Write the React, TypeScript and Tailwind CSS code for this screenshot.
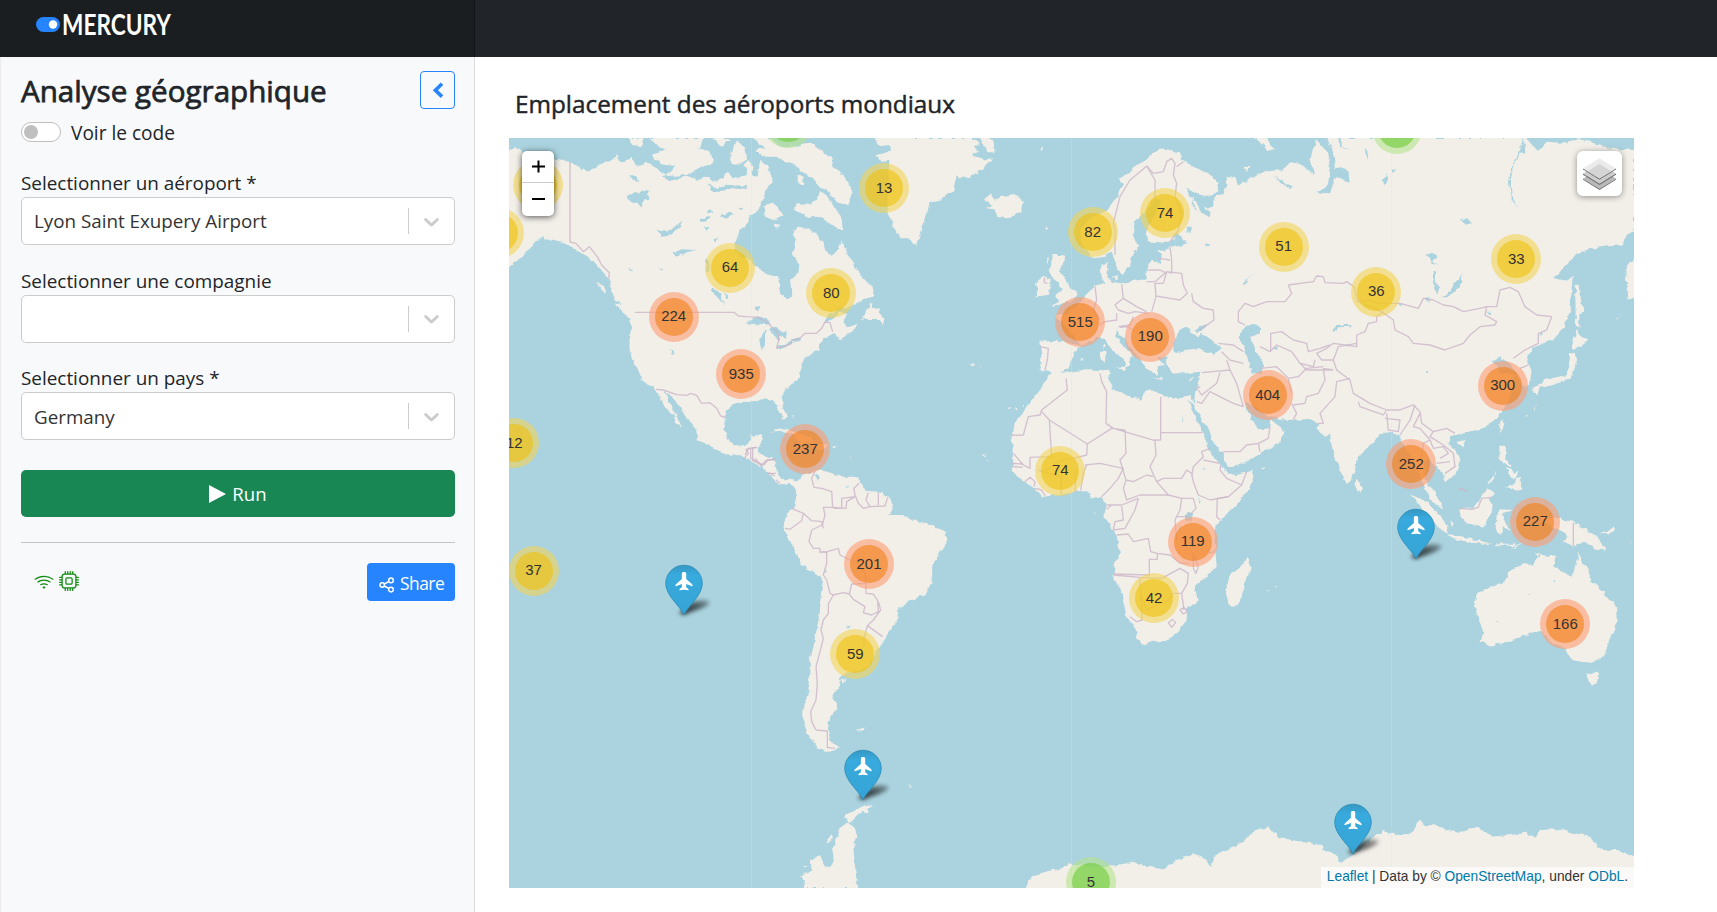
const LAND = "#f2efe9";
const WATER = "#aad3df";

type Region = { t: string; land?: string[]; water?: string[]; border?: string[] };

const regions: Region[] = [
  {
    t: "translate(500 60) scale(.33333)",
    land: [
      "M0 270L27 278L45 258L70 278L100 285L150 298L210 305L240 325L265 335L290 320L320 303L345 297L352 282L362 308L385 302L392 288L402 308L415 318L440 308L470 325L500 348L485 352L510 364L530 358L560 350L590 362L620 350L640 365L665 355L680 335L700 355L735 350L742 330L730 315L745 300L760 320L757 345L770 350L775 320L782 303L802 315L813 345L815 370L795 390L790 420L780 440L765 462L748 467L745 490L720 512L708 540L704 575L725 590L750 602L775 625L800 643L835 652L840 700L862 718L875 700L870 662L895 640L898 615L878 585L885 560L882 515L895 500L920 505L945 520L970 545L975 570L995 587L1015 570L1025 545L1040 580L1055 600L1065 625L1090 655L1115 680L1120 710L1090 718L1050 738L1015 745L985 765L970 790L990 782L1020 758L1042 762L1030 790L1045 802L1072 792L1060 815L1020 838L1000 820L975 835L960 850L960 870L925 885L905 910L905 935L890 960L860 985L845 1010L850 1040L860 1070L852 1082L835 1050L830 1025L790 1017L755 1027L730 1025L690 1040L675 1062L672 1110L690 1145L720 1160L745 1150L752 1130L785 1122L787 1140L770 1175L800 1190L825 1200L822 1235L845 1262L825 1250L800 1228L760 1208L720 1185L690 1187L640 1165L590 1138L592 1110L560 1075L535 1035L515 1010L494 992L502 1015L515 1042L530 1070L547 1105L528 1088L520 1065L498 1045L480 1010L465 985L430 965L410 920L395 895L388 860L393 800L390 765L365 740L345 715L335 690L325 655L300 625L275 598L240 575L200 552L150 540L130 530L105 545L85 572L60 595L27 625L0 640Z",
      "M380 234L398 255L425 258L430 234Z",
      "M450 234L475 262L500 268L455 285L480 312L522 318L495 348L560 345L595 325L640 310L632 275L598 265L612 234Z",
      "M640 234L660 258L690 242L684 234Z",
      "M690 300L698 262L712 238L735 270L738 300L715 315L700 312Z",
      "M755 234L810 234L850 262L900 258L930 245L960 268L992 290L1000 320L1030 345L1060 395L1040 435L1010 425L990 400L960 380L935 350L905 335L880 310L850 305L830 290L790 290L765 272L795 262Z",
      "M890 430L930 432L950 415L965 395L985 410L1000 440L1025 470L1028 512L1005 502L960 470L920 470L885 450Z",
      "M790 440L820 425L850 465L820 480L795 470Z",
      "M893 345L912 352L908 378L893 370Z",
      "M820 490L840 495L830 503Z",
      "M880 508L890 512L886 520Z",
      "M1118 725L1105 745L1082 772L1095 780L1135 780L1150 795L1152 778L1135 758L1140 742L1115 745Z",
      "M345 728L372 742L402 772L398 782L370 762Z",
      "M295 668L308 678L318 702L303 690Z",
      "M815 1115L840 1105L880 1115L930 1130L950 1145L905 1150L880 1125L840 1112Z",
      "M935 1150L985 1158L965 1170L940 1168Z",
      "M998 1160L1012 1160L1010 1164L998 1164Z",
    ],
    water: [
      "M380 410L400 400L425 395L450 388L440 405L450 415L430 425L425 440L412 425L395 425Z",
      "M392 345L408 350L415 365L398 362Z",
      "M470 510L500 515L530 495L548 482L535 505L505 528L485 530Z",
      "M520 580L545 568L592 570L560 576L530 590Z",
      "M635 685L650 690L660 700L672 735L655 715L640 700Z",
      "M665 690L688 715L682 720Z",
      "M735 792L770 768L800 775L812 795L785 788L765 795Z",
      "M800 808L785 820L778 845L785 870L795 855L795 825Z",
      "M802 805L825 800L845 815L860 812L855 835L838 825L835 845L825 825Z",
      "M828 860L850 855L875 845L872 855L840 868Z",
      "M873 840L900 832L898 843L878 848Z",
      "M508 870L520 875L517 883Z",
      "M765 740L777 738L775 750L766 750Z",
      "M480 625L490 628L486 633Z",
      "M385 625L397 635L390 636Z",
      "M620 455L635 450L640 458L624 462Z",
      "M660 470L690 455L700 462L675 475Z",
      "M600 480L625 470L630 476L605 490Z",
      "M610 500L625 498L620 510Z",
      "M615 600L625 595L630 640L620 635Z",
      "M640 535L655 530L650 545Z",
      "M715 440L730 442L722 450Z",
      "M625 370L650 385L690 375L745 378L740 390L700 385L670 395L640 395Z",
    ],
    border: [
      "M210 308V546L228 550L250 575L268 560L292 590L305 615L328 638L326 655",
      "M405 757H702L715 768L740 770L775 772L805 790L835 822L836 840L830 865L872 852L875 842L900 835L915 820L950 820L965 805L975 786L990 788L998 815",
      "M468 988L490 990L530 1004L560 1006L572 1000L590 1006L605 1030L630 1028L650 1045L662 1068L676 1073",
      "M730 1198L745 1180L738 1168L770 1162M752 1165V1195L790 1215L805 1200L825 1198M765 1195L785 1218M805 1238L825 1248",
    ],
  },
  {
    t: "translate(780 130) scale(.33333)",
    land: [
      "M283 24L300 45L328 50L330 65L290 75L305 95L328 92L326 150L322 240L340 290L362 325L385 325L405 347L415 335L425 290L440 250L450 215L485 208L520 180L530 135L540 145L570 140L605 120L640 85L610 88L575 75L600 65L580 50L600 42L575 24Z",
      "M600 24L612 45L625 70L643 70L642 40L630 24Z",
      "M615 210L630 190L645 212L665 200L700 192L715 198L730 218L720 245L680 265L650 260L640 238L618 234L638 226Z",
      "M818 375L850 375L855 390L835 425L857 440L870 475L892 488L878 512L850 520L815 528L835 512L822 498L845 480L838 460L818 445L808 420L815 400Z",
      "M768 460L790 440L812 450L808 490L785 500L765 502L775 480Z",
      "M798 385L806 378L803 400Z",
      "M780 55L790 53L786 61Z",
      "M796 292L805 294L800 303Z",
      "M570 700L586 702L580 706Z M600 710L607 712L603 714Z",
      "M682 830L692 834L686 838Z M705 832L715 838L708 841Z M725 828L730 820L728 832Z",
    ],
    border: ["M793 442V458L802 460"],
  },
  {
    t: "translate(1000 130) scale(.33333)",
    land: [
      "M118 635L180 632L245 648L215 610L190 580L165 560L205 550L240 520L262 490L290 465L312 458L303 430L303 408L322 395L327 412L322 435L335 455L365 460L400 452L440 447L440 415L455 390L480 402L485 375L475 365L510 353L550 345L525 325L485 340L450 338L440 315L445 290L468 250L485 215L470 205L440 240L405 275L398 310L412 345L420 352L398 370L390 410L368 432L352 418L342 385L335 365L312 380L280 385L250 350L240 300L270 265L320 240L345 210L370 160L355 148L385 130L410 105L440 90L455 70L490 55L540 68L545 88L580 110L625 130L650 150L655 180L630 200L590 192L555 172L572 200L590 215L600 245L625 262L632 245L612 235L640 230L640 205L670 190L682 165L680 138L705 140L715 165L750 145L800 125L850 118L865 95L900 102L945 135L938 110L930 95L940 50L955 24L1580 24L1600 50L1615 62L1640 35L1700 40L1735 24L1760 30L1820 55L1902 60L1902 305L1885 315L1865 345L1800 352L1760 360L1730 370L1700 405L1662 445L1700 452L1718 440L1715 470L1712 540L1690 590L1660 630L1630 640L1600 655L1578 690L1595 720L1590 760L1570 770L1550 740L1535 705L1500 680L1475 695L1500 725L1540 735L1540 770L1520 820L1490 865L1450 895L1390 910L1355 918L1345 940L1370 965L1380 1000L1370 1030L1335 1055L1328 1028L1310 1010L1285 985L1272 1000L1275 1050L1300 1080L1325 1120L1325 1135L1290 1110L1265 1050L1250 1010L1220 960L1200 920L1180 905L1140 910L1115 940L1070 985L1065 1020L1055 1050L1040 1062L1015 1010L995 950L990 908L975 920L950 895L960 885L925 868L860 870L815 862L790 850L760 825L735 815L745 850L762 878L775 898L805 895L815 868L835 885L852 905L835 940L780 972L740 995L682 1012L670 975L640 935L620 890L595 850L582 825L585 790L598 745L600 725L560 730L520 730L498 700L500 680L470 682L495 708L470 712L475 735L455 730L440 715L420 690L395 655L370 625L345 600L350 625L375 650L402 680L390 682L390 702L376 715L375 690L340 665L320 635L300 620L260 640L235 655L215 685L205 718L160 735L145 722L118 720L125 680Z",
      "M348 710L380 710L372 725Z",
      "M303 665L317 665L315 695L303 690Z",
      "M308 642L316 642L314 660Z",
      "M765 24L802 24L825 60L800 65L790 45Z",
      "M730 108L748 108L740 125Z",
      "M460 745L490 745L485 750Z M565 748L580 744L572 752Z",
      "M240 690L250 684L248 692Z M338 440L355 435L350 452Z",
      "M785 1013L793 1014L789 1018Z",
    ],
    water: [
      "M535 600L558 590L572 598L575 610L595 622L605 608L625 622L655 645L660 660L640 672L595 655L560 660L535 668L520 662L520 640Z",
      "M580 602L600 590L625 580L612 600L590 607Z",
      "M720 605L755 582L780 585L780 610L750 620L765 665L775 675L790 700L785 732L755 728L745 690L735 660L720 630Z",
      "M518 315L530 305L548 325L562 340L550 345L535 335Z",
      "M560 290L572 290L572 312L562 305Z",
      "M730 470L738 445L770 430L742 445L738 465Z",
      "M820 655L835 648L830 660Z",
      "M820 140L880 170L870 178Z M617 340L628 345L620 350Z",
      "M570 200L580 215L592 248L580 230Z",
    ],
    border: [
      "M345 375V330L345 300L340 280L360 200L390 150L420 125L440 108L460 130L490 125L500 95L515 85L525 100L520 135L530 160L525 200L545 250L535 300L510 335M440 108L465 150V210M530 110L550 95",
      "M510 350L515 390V430L500 425L490 460L465 460L468 500L455 545M445 420L480 420L500 430M475 385L510 390M440 455H465L500 425L545 430L550 465L562 490L540 510L510 505L468 498M575 490L580 515L610 535L640 540L642 570L600 600",
      "M285 470L290 510L280 540L300 570M365 462L370 505L345 525L355 540L385 550L405 545L445 550M370 505L410 530L440 545M350 550L350 570L315 575L300 585M355 590L390 585L400 560M120 650L145 655L142 690L135 720M400 600L380 590L360 592",
      "M865 465L940 455L950 438L970 440L975 458L1030 460L1040 455L1062 470L1070 500L1075 515M865 465L875 490L855 515L800 515L760 530L735 520L715 545L715 575L735 585M812 665V610L845 605L880 630L920 640L925 665L960 655L990 645M780 650L810 665L830 645L875 665L900 700L940 710L945 690M875 790L865 745L895 740L920 715L970 710M780 715L830 710L865 745",
      "M655 640L700 645L730 665M665 665L690 690L730 700M680 690L690 720L605 728M660 728L650 760L605 795L595 780M690 720L710 760L730 830L700 820L630 785L605 820L590 815M585 780L600 770M670 965L720 965L740 945L775 940L780 965M775 940L805 925L810 890M875 820L890 850L880 868",
      "M1070 515L1110 510L1130 520L1200 520L1255 535L1270 505L1300 510L1330 525L1360 530L1390 545L1440 535L1460 530L1455 555L1490 575L1485 585L1440 590L1410 615L1390 640L1335 660L1290 645L1240 640L1225 620L1185 600L1180 570L1145 545L1075 515M1460 530L1490 530L1500 480L1530 472L1555 485L1575 530L1610 555L1655 560L1640 600L1615 610V640L1575 660L1540 685M1560 715L1585 705",
      "M1150 545L1130 560L1130 575L1105 580L1095 605L1070 615L1070 650L1000 640L980 655L950 670L965 690L1000 690L1010 720L1050 750L1060 790L1110 820L1160 840L1200 840L1240 825L1260 845L1265 880L1300 905L1340 895L1365 910M1000 690L1015 650L1070 640M1075 815L1080 830L1150 855L1160 840M1160 850L1165 900L1195 905L1200 870L1155 865M1200 915L1230 870L1245 825M1260 850L1240 890L1260 895L1290 930M1260 1010L1270 940L1290 930L1300 955L1330 950L1345 970L1320 985M1300 905L1290 920L1330 945L1360 970L1365 1010L1335 1030M1310 1000L1350 995M1375 1080L1385 1075L1400 1085",
      "M1050 745L1010 755L1005 800L960 850L970 880L950 880M1000 720L970 715L975 750L955 790L920 800L915 820L880 825M900 700L920 720L1000 720",
    ],
  },
  {
    t: "translate(1300 130) scale(.33333)",
    land: [
      "M700 775L740 745L795 738L808 710L810 670L825 665L828 700L815 745L780 755L740 768L718 772L712 797L700 790Z",
      "M815 652L830 600L848 622L865 632L835 655L820 660Z",
      "M825 465L835 468L850 545L838 550L838 595L828 590Z",
      "M1010 385L985 400L977 425L975 450L982 475L985 510L1010 500Z",
      "M597 885L610 868L613 880L605 907Z",
      "M472 935L497 930L485 952Z",
      "M168 1045L188 1070L180 1085L167 1080Z",
      "M598 950L618 950L616 980L628 1000L640 1015L615 1000L598 990Z",
      "M650 1045L662 1040L664 1082L645 1080L615 1070L640 1065Z",
      "M618 1012L630 1015L645 1030L655 1020L650 1045L635 1045Z",
      "M565 1060L590 1030L592 1033L570 1062Z",
      "M870 628L915 600L880 622Z M945 572L975 545L950 570Z M676 860L685 850L680 860Z M700 845L712 818L705 842Z",
    ],
    water: [
      "M45 24L85 24L100 70L105 115L125 112L145 125L150 160L130 150L108 140L90 190L60 188L50 182L80 175L90 130L85 70Z",
      "M115 24L125 24L125 50L150 60L130 55L118 45Z",
      "M195 50L202 60L205 90L198 80Z",
      "M245 150L260 130L265 150L250 165Z M270 120L290 118L275 128Z",
      "M422 502L445 490L465 460L487 430L485 455L465 485L440 502Z",
      "M375 375L395 368L410 375L400 395L412 405L395 400L390 380Z",
      "M100 600L110 585L155 585L152 590L115 592L105 607Z",
      "M130 645L150 645L140 652Z M378 720L388 722L385 730Z",
      "M480 265L510 270L512 280L495 285Z",
      "M295 523L308 520L306 530Z M560 545L572 545L568 555Z",
      "M378 502L388 505L385 520Z M718 605L732 605L725 618Z",
      "M398 420L405 425L405 450L418 475L412 495L400 460Z",
      "M672 24L676 70L664 66L640 105L634 140L632 170L640 210L655 235L636 212L627 160L634 110L660 62Z",
    ],
  },
  {
    t: "translate(740 400) scale(.33333)",
    land: [
      "M40 170L60 192L85 220L118 255L150 248L165 262L172 290L165 320L140 345L128 390L160 440L185 495L245 535L248 560L242 620L230 690L210 790L205 870L190 930L190 965L205 1005L235 1045L270 1055L300 1042L275 1030L262 990L260 965L285 935L292 912L275 890L298 860L300 830L320 820L385 800L420 740L450 690L475 655L478 625L515 600L555 585L575 545L578 490L600 460L622 430L620 395L590 385L560 370L520 360L485 345L445 345L462 325L450 300L430 280L380 275L365 250L345 230L300 230L262 215L232 210L185 225L170 245L150 236L130 243L110 215L105 180Z",
      "M190 1464L195 1445L180 1430L215 1412L212 1380L240 1365L255 1400L280 1395L280 1340L300 1290L322 1265L345 1285L352 1310L340 1340L345 1400L352 1464Z",
      "M312 1252L345 1230L365 1220L405 1214L385 1222L385 1240L362 1235L330 1265Z",
      "M258 1330L275 1302L278 1315L265 1332Z M187 1395L200 1395L192 1402Z",
      "M345 990L375 982L370 992Z M590 1028L612 1040L605 1036Z M505 1156L518 1158L510 1161Z",
      "M725 165L740 168L730 172Z M738 178L748 180L742 182Z",
      "M277 138L293 140L285 143Z M302 840L316 838L310 848Z M328 165L335 178L342 190L330 170Z",
      "M155 45L160 50L157 55Z",
    ],
    water: ["M228 220L237 230L233 242L226 236Z", "M320 255L327 258L323 265Z", "M250 505L260 515L255 520Z", "M320 680L332 680L326 688Z"],
    border: [
      "M225 213L215 235L222 262L245 265L275 275L278 322L250 322L255 345L247 375L215 390L207 425L220 445H240V457L262 455L295 445L300 465L330 480L355 490L375 520L378 550L335 552L328 582L310 578L280 585L270 580L260 540L250 525L260 490L260 458",
      "M280 325L305 325L305 295L345 290L342 265L357 250M345 285L355 310L370 325L390 320L378 300L385 278M390 320L435 318L443 292M415 280L415 315M278 322L318 325L320 305L345 290",
      "M155 325L190 340L185 362L150 388L135 385M190 340L215 362L245 365L250 385M245 455L262 458M378 550V580L400 582L413 602L415 635L395 645L370 638L375 620L340 598L328 582M415 605L422 630L400 660L382 677L428 710M382 677L372 715V740",
      "M280 585L265 612L265 640L250 660L243 690L250 715L240 755L228 800L232 850L228 900L212 935L215 965L228 990L262 993V1042L285 1045",
      "M15 165L25 145L50 142M38 145V182L65 195L80 180L104 178M82 220L108 220M108 240L120 250",
    ],
  },
  {
    t: "translate(980 420) scale(.33333)",
    land: [
      "M205 -130L215 -145L260 -142L320 -152L388 -148L388 -115L400 -92L440 -75L482 -60L495 -88L530 -88L545 -72L600 -65L635 -72L640 -45L622 -60L640 -20L662 20L680 70L695 105L722 132L745 160L770 165L820 152L818 185L800 220L760 265L720 300L700 330L705 380L710 440L685 465L645 500L653 545L622 560L620 600L590 640L565 660L520 665L487 675L465 650L470 635L440 590L425 520L400 470L405 430L420 400L410 345L370 290L380 255L365 232L335 232L320 210L285 215L240 225L190 230L150 195L118 175L95 155L100 120L95 50L110 0L150 -50L180 -90Z",
      "M800 410L812 445L795 495L775 555L748 558L738 520L748 465L782 445Z",
      "M862 507L870 510L866 514Z M885 498L892 499L888 503Z M843 143L856 145L848 148Z M340 274L347 276L343 279Z",
    ],
    water: ["M615 285L625 278L640 280L635 302L615 298Z", "M655 230L662 245L658 252Z", "M598 310L602 340L596 330Z", "M668 148L678 149L672 153Z", "M604 -25L614 12L610 8Z"],
    border: [
      "M258 -125L262 -90L230 -65L185 -30L180 -15L145 -10L130 45L95 46M185 -25L208 0L215 110L150 112L150 145L130 135L100 100M208 0L322 72L320 105L280 115L240 122L200 150M322 72L395 25L435 30M360 -140L365 -115L380 -85L378 10L400 25L525 62M542 -70V60H525L528 105L510 140L530 185L565 225M542 38H668",
      "M435 30L438 100L420 120L438 180L430 205L440 240L480 225L565 225L605 235L640 235M438 180L460 185L500 165L520 170M530 185L550 175L605 175L620 150L635 160L640 185L655 225L690 240L745 230L785 195L740 175L720 150L722 135M635 170L640 140L670 110L665 95L690 85M670 120L720 130M785 195L800 155",
      "M315 135L360 130L430 145L415 175L390 205L365 230M302 210L310 160L320 135M380 255H425L475 235M380 268L395 255M425 258L430 300L405 305L400 330L435 325L465 270L475 235M410 345L445 342L460 365L505 355L512 395L532 400V418H508V465L400 462M400 465L480 472L545 475M532 400L570 405L600 430L625 430M605 235L600 270L585 300L590 360M640 235L648 265L625 290H590M712 235L710 290L720 300M715 235L745 230M545 475L600 445L625 460L622 490L605 520L580 520M605 520L612 570M480 475L487 600L470 605L450 590",
      "M600 570L612 562L622 575L610 582ZM565 608L578 598L587 608L575 622ZM640 400L655 440L648 460L640 445ZM485 530L500 570L530 555L560 545L580 520M685 400L705 395M95 130L128 132M98 140L128 142M135 185L150 172L165 185L162 200M165 205L185 210L195 228M285 215L288 150M243 222L245 150M175 150L240 170",
    ],
  },
  {
    t: "translate(1330 420) scale(.33333)",
    land: [
      "M440 520L470 505L520 490L540 455L580 430L605 440L620 412L635 405L680 410L670 435L700 460L725 470L735 440L745 395L755 425L772 440L785 485L820 515L858 560L860 600L845 650L820 710L785 728L755 725L725 720L705 680L670 672L632 632L590 645L540 663L480 678L452 665L460 640L445 590L432 560Z",
      "M768 758L806 758L800 790L785 797Z",
      "M620 285L690 295L740 310L770 330L800 350L830 392L790 385L765 365L735 378L698 365L715 350L690 330L650 310Z",
      "M808 342L842 330L852 318L855 330L840 343Z M870 335L885 350L880 345Z M890 355L912 372L905 368Z",
      "M388 265L430 262L455 230L470 205L495 220L480 240L490 265L475 295L465 320L410 310L392 290Z",
      "M240 220L280 240L320 275L340 300L355 315L353 342L325 322L290 280Z",
      "M355 343L400 350L450 362L488 372L440 370L370 358Z M495 370L560 372L555 378L500 375Z M535 390L580 365L560 380Z",
      "M500 285L510 268L550 270L515 280L520 300L540 330L520 322L512 342L497 325Z",
      "M360 305L372 310L366 317Z",
      "M612 402L632 400L625 407Z",
    ],
    water: ["M594 522L604 524L598 528Z M668 482L675 484L670 487Z M495 602L502 604L498 607Z"],
    border: ["M730 308V378", "M390 265L425 268L445 262L455 235L485 232"],
  },
  {
    t: "translate(1000 770) scale(.41209 .33333)",
    land: [
      "M62 354L75 325L110 305L150 295L165 280L220 290L290 285L320 275L340 285L395 298L430 270L470 250L500 265L512 290L522 258L590 215L620 180L650 172L680 205L780 225L785 240L815 250L822 280L865 250L900 205L930 183L960 195L1000 190L1015 150L1030 170L1055 165L1085 180L1120 185L1160 170L1190 200L1240 195L1275 185L1300 203L1310 180L1355 178L1430 200L1460 240L1500 240L1553 265V360H62Z",
    ],
  },
];

type Size = "s" | "m" | "l";
const outer: Record<Size, string> = {
  s: "bg-[rgba(181,226,140,0.6)]",
  m: "bg-[rgba(241,211,87,0.6)]",
  l: "bg-[rgba(253,156,115,0.6)]",
};
const inner: Record<Size, string> = {
  s: "bg-[rgba(110,204,57,0.6)]",
  m: "bg-[rgba(240,194,12,0.6)]",
  l: "bg-[rgba(241,128,23,0.6)]",
};

const clusters: [number, number, string, Size][] = [
  [278.5, -15.5, "", "s"],
  [28.7, 47, "", "m"],
  [-10, 94.7, "", "m"],
  [375, 50, "13", "m"],
  [221, 129.7, "64", "m"],
  [322.3, 155, "80", "m"],
  [164.7, 178.7, "224", "l"],
  [232.3, 236, "935", "l"],
  [296.3, 311.3, "237", "l"],
  [5.3, 305, "12", "m"],
  [24.5, 432.5, "37", "m"],
  [583.7, 94, "82", "m"],
  [656, 75, "74", "m"],
  [774.7, 108.7, "51", "m"],
  [571.3, 184, "515", "l"],
  [641.3, 198.7, "190", "l"],
  [758.7, 257.3, "404", "l"],
  [551.3, 332.7, "74", "m"],
  [867.3, 153.7, "36", "m"],
  [1007.3, 121, "33", "m"],
  [993.7, 247.5, "300", "l"],
  [902.3, 326, "252", "l"],
  [1026.3, 383.7, "227", "l"],
  [887.7, -9, "", "s"],
  [360, 426, "201", "l"],
  [346.3, 516, "59", "m"],
  [683.7, 403.7, "119", "l"],
  [645, 460, "42", "m"],
  [1056.3, 486, "166", "l"],
  [582, 744, "5", "s"],
];

const pins: [number, number][] = [
  [175, 427],
  [353.7, 612],
  [907.3, 371],
  [843.7, 665.5],
];

function WorldMap() {
  return (
    <svg className="block h-full w-full" viewBox="509 138 1125 750">
      <defs>
        <filter id="coast" x="0" y="0" width="100%" height="100%">
          <feTurbulence type="fractalNoise" baseFrequency="0.16" numOctaves="2" seed="4" result="n" />
          <feDisplacementMap in="SourceGraphic" in2="n" scale="5" xChannelSelector="R" yChannelSelector="G" />
        </filter>
      </defs>
      <g filter="url(#coast)">
        <rect x="400" y="60" width="1340" height="900" fill={WATER} />
        {regions.map((r) => (
          <g key={r.t} transform={r.t} fill={LAND}>
            {r.land?.map((d) => <path key={d} d={d} />)}
          </g>
        ))}
        {regions.map((r) => (
          <g key={r.t} transform={r.t} fill={WATER}>
            {r.water?.map((d) => <path key={d} d={d} />)}
          </g>
        ))}
      </g>
      {regions.map((r) => (
        <g key={r.t} transform={r.t} fill="none" stroke="#cbb5c8" strokeOpacity=".8" strokeWidth="4" strokeLinejoin="round">
          {r.border?.map((d) => <path key={d} d={d} />)}
        </g>
      ))}
      <path d="M751.5 138V888M1071.5 138V888M1391.5 138V888" stroke="#dfe6e3" strokeOpacity=".28" />
    </svg>
  );
}

function Pin({ x, y }: { x: number; y: number }) {
  return (
    <div className="absolute h-[52px] w-[70px]" style={{ left: x - 19, top: y }}>
      <svg width="70" height="52" viewBox="0 0 70 52" overflow="visible">
        <defs>
          <linearGradient id="pin" x1="0" y1="0" x2="0" y2="1">
            <stop offset="0" stopColor="#3598c4" />
            <stop offset=".2" stopColor="#38aadd" />
            <stop offset="1" stopColor="#36a3d5" />
          </linearGradient>
          <linearGradient id="shade" x1="0" y1="1" x2="1" y2="0">
            <stop offset="0" stopOpacity=".8" />
            <stop offset=".55" stopOpacity=".6" />
            <stop offset="1" stopOpacity=".25" />
          </linearGradient>
          <filter id="soft" x="-40%" y="-60%" width="180%" height="220%">
            <feGaussianBlur stdDeviation="1.9" />
          </filter>
        </defs>
        <path d="M14 48L25 38C32 34.500 42 34.500 44.500 37C44.500 42 30 45 19 50Z" fill="url(#shade)" filter="url(#soft)" />
        <path
          d="M19 50C17 43 .7 31 .7 18.5A18.3 18.3 0 0 1 37.3 18.5C37.3 31 21 43 19 50Z"
          fill="url(#pin)"
          stroke="#2d8bb5"
          strokeWidth=".8"
        />
        <path
          transform="translate(10.2 7) scale(.3333)"
          fill="#fff"
          d="M20 6C20 2 22 0 26.500 0C31 0 33 2 33 6V21L50 36C53 39 53 43 51 43L33 36V46L40 51V55L27 53L13 55V51L20 46V36L2 43C0 43 0 39 3 36L20 21Z"
        />
      </svg>
    </div>
  );
}

function Select({ label, value }: { label: string; value?: string }) {
  return (
    <div className="mb-[20.6px]">
      <div className="h-[29px] text-[18.9px] leading-[30px] whitespace-nowrap">{label}</div>
      <div className="flex h-[48px] items-center rounded-[5px] border border-[#ccc] bg-white">
        <div className="flex-1 pt-px pl-[12px] text-[18.8px] whitespace-nowrap text-[#333]">{value}</div>
        <div className="h-[26px] w-px bg-[#ccc]" />
        <div className="flex w-[45px] justify-center">
          <svg width="25" height="25" viewBox="0 0 20 20" fill="#ccc">
            <path d="M4.516 7.548c0.436-0.446 1.043-0.481 1.576 0l3.908 3.747 3.908-3.747c0.533-0.481 1.141-0.446 1.574 0 0.436 0.445 0.408 1.197 0 1.615-0.406 0.418-4.695 4.502-4.695 4.502-0.217 0.223-0.502 0.335-0.787 0.335s-0.57-0.112-0.789-0.335c0 0-4.287-4.084-4.695-4.502s-0.436-1.17 0-1.615z" />
          </svg>
        </div>
      </div>
    </div>
  );
}

export default function App() {
  return (
    <div className="flex h-[912px] w-[1717px] flex-col overflow-hidden bg-white font-['Open_Sans','Noto_Sans',sans-serif] text-[#212529]">
      <header className="flex h-[57px] shrink-0 bg-[#212529]">
        <div className="w-[475px] border-r border-[#121517] bg-[#1a1e21] pt-[6px] pl-[36px]">
          <svg width="150" height="40" viewBox="0 -4 150 40" overflow="visible">
            <rect x="0" y="7" width="24" height="15" rx="7.5" fill="#2684ff" />
            <circle cx="17" cy="14.5" r="4.2" fill="#fff" />
            <text x="26" y="24.5" fill="#fff" fontFamily="Lato, sans-serif" fontWeight="700" fontSize="28" textLength="109" lengthAdjust="spacingAndGlyphs">
              MERCURY
            </text>
          </svg>
        </div>
      </header>
      <div className="flex flex-1">
        <aside className="w-[475px] shrink-0 border-x border-r-[#d9dbdd] border-l-[#ececee] bg-[#f8f9fb] pr-[19px] pl-5">
          <div className="flex h-[52px] items-end justify-between">
            <h1 className="text-[29.6px] leading-[37px] whitespace-nowrap [-webkit-text-stroke:0.75px_#212529]">Analyse géographique</h1>
            <button className="flex h-[38px] w-[35px] items-center justify-center rounded-[4px] border border-[#2684ff]">
              <svg width="12" height="17" viewBox="0 0 12 17" fill="none" stroke="#2684ff" strokeWidth="3.6">
                <path d="M10 1.8L3.4 8.2L10 14.6" />
              </svg>
            </button>
          </div>
          <div className="mt-[13px] flex h-[20px] items-center">
            <div className="flex h-[20px] w-[40px] items-center rounded-full border border-[#bfbfbf] bg-white pl-[2px]">
              <div className="size-[14px] rounded-full bg-[#bfbfbf]" />
            </div>
            <span className="mt-[2px] ml-[10px] text-[19.1px] whitespace-nowrap">Voir le code</span>
          </div>
          <div className="mt-[26px]">
            <Select label="Selectionner un aéroport *" value="Lyon Saint Exupery Airport" />
            <Select label="Selectionner une compagnie" />
            <Select label="Selectionner un pays *" value="Germany" />
          </div>
          <button className="mt-[30px] flex h-[47px] w-full items-center justify-center gap-[6px] rounded-[5px] bg-[#198754] text-[18.6px] text-white">
            <svg width="17" height="18" viewBox="0 0 17 18" fill="#fff">
              <path d="M0 0L17 9L0 18Z" />
            </svg>
            Run
          </button>
          <div className="mt-[25px] border-t border-[#c3c4c6]" />
          <div className="mt-[20px] flex h-[38px] justify-between">
            <div className="flex gap-[5px] pt-[8px] pl-[13px]">
              <svg className="mt-[1px]" width="20" height="20" viewBox="0 0 16 16" fill="#108a10">
                <path d="M15.384 6.115a.485.485 0 0 0-.047-.736A12.44 12.44 0 0 0 8 3C5.259 3 2.723 3.882.663 5.379a.485.485 0 0 0-.048.736.52.52 0 0 0 .668.05A11.45 11.45 0 0 1 8 4c2.507 0 4.827.802 6.716 2.164.205.148.49.13.668-.049" />
                <path d="M13.229 8.271a.482.482 0 0 0-.063-.745A9.46 9.46 0 0 0 8 6c-1.905 0-3.68.56-5.166 1.526a.48.48 0 0 0-.063.745.525.525 0 0 0 .652.065A8.46 8.46 0 0 1 8 7a8.46 8.46 0 0 1 4.576 1.336c.206.132.48.108.653-.065m-2.183 2.183c.226-.226.185-.605-.1-.75A6.5 6.5 0 0 0 8 9c-1.06 0-2.062.254-2.946.704-.285.145-.326.524-.1.75l.015.015c.16.16.407.19.611.09A5.5 5.5 0 0 1 8 10c.868 0 1.69.201 2.42.56.203.1.45.07.61-.091zM9.06 12.44c.196-.196.198-.52-.04-.66A2 2 0 0 0 8 11.5a2 2 0 0 0-1.02.28c-.238.14-.236.464-.04.66l.706.706a.5.5 0 0 0 .707 0l.707-.707z" />
              </svg>
              <svg width="20" height="20" viewBox="0 0 16 16" fill="#108a10">
                <path d="M5 0a.5.5 0 0 1 .5.5V2h1V.5a.5.5 0 0 1 1 0V2h1V.5a.5.5 0 0 1 1 0V2h1V.5a.5.5 0 0 1 1 0V2A2.5 2.5 0 0 1 14 4.5h1.5a.5.5 0 0 1 0 1H14v1h1.5a.5.5 0 0 1 0 1H14v1h1.5a.5.5 0 0 1 0 1H14v1h1.5a.5.5 0 0 1 0 1H14a2.5 2.5 0 0 1-2.5 2.5v1.5a.5.5 0 0 1-1 0V14h-1v1.5a.5.5 0 0 1-1 0V14h-1v1.5a.5.5 0 0 1-1 0V14h-1v1.5a.5.5 0 0 1-1 0V14A2.5 2.5 0 0 1 2 11.5H.5a.5.5 0 0 1 0-1H2v-1H.5a.5.5 0 0 1 0-1H2v-1H.5a.5.5 0 0 1 0-1H2v-1H.5a.5.5 0 0 1 0-1H2A2.5 2.5 0 0 1 4.5 2V.5A.5.5 0 0 1 5 0m-.5 3A1.5 1.5 0 0 0 3 4.5v7A1.5 1.5 0 0 0 4.5 13h7a1.5 1.5 0 0 0 1.5-1.5v-7A1.5 1.5 0 0 0 11.5 3zM5 6.5A1.5 1.5 0 0 1 6.5 5h3A1.5 1.5 0 0 1 11 6.5v3A1.5 1.5 0 0 1 9.5 11h-3A1.5 1.5 0 0 1 5 9.5zM6.5 6a.5.5 0 0 0-.5.5v3a.5.5 0 0 0 .5.5h3a.5.5 0 0 0 .5-.5v-3a.5.5 0 0 0-.5-.5z" />
              </svg>
            </div>
            <button className="flex w-[88px] items-center rounded-[4px] bg-[#2684ff] pt-px pl-[12px] text-[17.4px] tracking-[-0.5px] text-white">
              <svg className="mt-[5px] mr-[5px]" width="16" height="16" viewBox="0 0 16 16" fill="none" stroke="#fff" strokeWidth="1.5">
                <circle cx="3.2" cy="8" r="2.2" />
                <circle cx="12" cy="3.4" r="2.3" />
                <circle cx="12" cy="12.6" r="2.3" />
                <path d="M5.2 7L10 4.5M5.2 9L10 11.5" />
              </svg>
              Share
            </button>
          </div>
        </aside>
        <main className="flex-1 pl-[34px]">
          <h2 className="h-[81px] pt-[30px] pl-[6px] text-[24.3px] leading-[34px] whitespace-nowrap [-webkit-text-stroke:0.45px_#212529]">Emplacement des aéroports mondiaux</h2>
          <div className="relative h-[750px] w-[1125px] overflow-hidden bg-[#aad3df] font-['Liberation_Sans',Arial,sans-serif]">
            <WorldMap />
            {clusters.map(([x, y, n, s]) => (
              <div
                key={`${x}-${y}`}
                className={`absolute flex size-[50px] items-center justify-center rounded-full ${outer[s]}`}
                style={{ left: x - 25, top: y - 25 }}
              >
                <div className={`flex size-[38px] items-center justify-center rounded-full text-[15px] text-[#333] ${inner[s]}`}>{n}</div>
              </div>
            ))}
            {pins.map(([x, y]) => (
              <Pin key={x} x={x} y={y} />
            ))}
            <div className="absolute top-[13px] left-[13px] w-[32px] rounded-[5px] bg-white shadow-[0_1px_6px_rgba(0,0,0,0.65)]">
              <div className="flex h-[32px] items-center justify-center border-b border-[#ccc]">
                <svg width="13" height="13" viewBox="0 0 13 13" stroke="#000" strokeWidth="2">
                  <path d="M0 6.5H13M6.5 .5V12.5" />
                </svg>
              </div>
              <div className="flex h-[33px] items-center justify-center">
                <svg width="13" height="13" viewBox="0 0 13 13" stroke="#000" strokeWidth="2">
                  <path d="M0 6H13" />
                </svg>
              </div>
            </div>
            <div className="absolute top-[13px] right-[12px] flex size-[45px] items-center justify-center rounded-[6px] bg-white shadow-[0_1px_6px_rgba(0,0,0,0.4)]">
              <svg width="33" height="33" viewBox="0 0 26 26">
                <path d="M.032 17.056l13-8 13 8-13 8z" fill="#b9b9b9" />
                <path d="M.032 17.056l-.032.93 13 8 13-8 .032-.93-13 8z" fill="#737373" />
                <path d="M0 13.076l13-8 13 8-13 8z" fill="#cdcdcd" />
                <path d="M0 13.076v.91l13 8 13-8v-.91l-13 8z" fill="#737373" />
                <path d="M0 8.986l13-8 13 8-13 8z" fill="#e9e9e9" fillOpacity=".9" />
                <path d="M0 8.986v.91l13 8 13-8v-.91l-13 8z" fill="#737373" />
                <path d="M3.8 11.3L13 5.6l9.2 5.7L13 17z" fill="#d5d5d5" />
              </svg>
            </div>
            <div className="absolute right-0 bottom-0 h-[21px] bg-white/70 px-[6px] text-[13.75px] leading-[19px] whitespace-nowrap text-[#333]">
              <span className="text-[#0078a8]">Leaflet</span> | Data by © <span className="text-[#0078a8]">OpenStreetMap</span>, under <span className="text-[#0078a8]">ODbL</span>.
            </div>
          </div>
        </main>
      </div>
    </div>
  );
}
